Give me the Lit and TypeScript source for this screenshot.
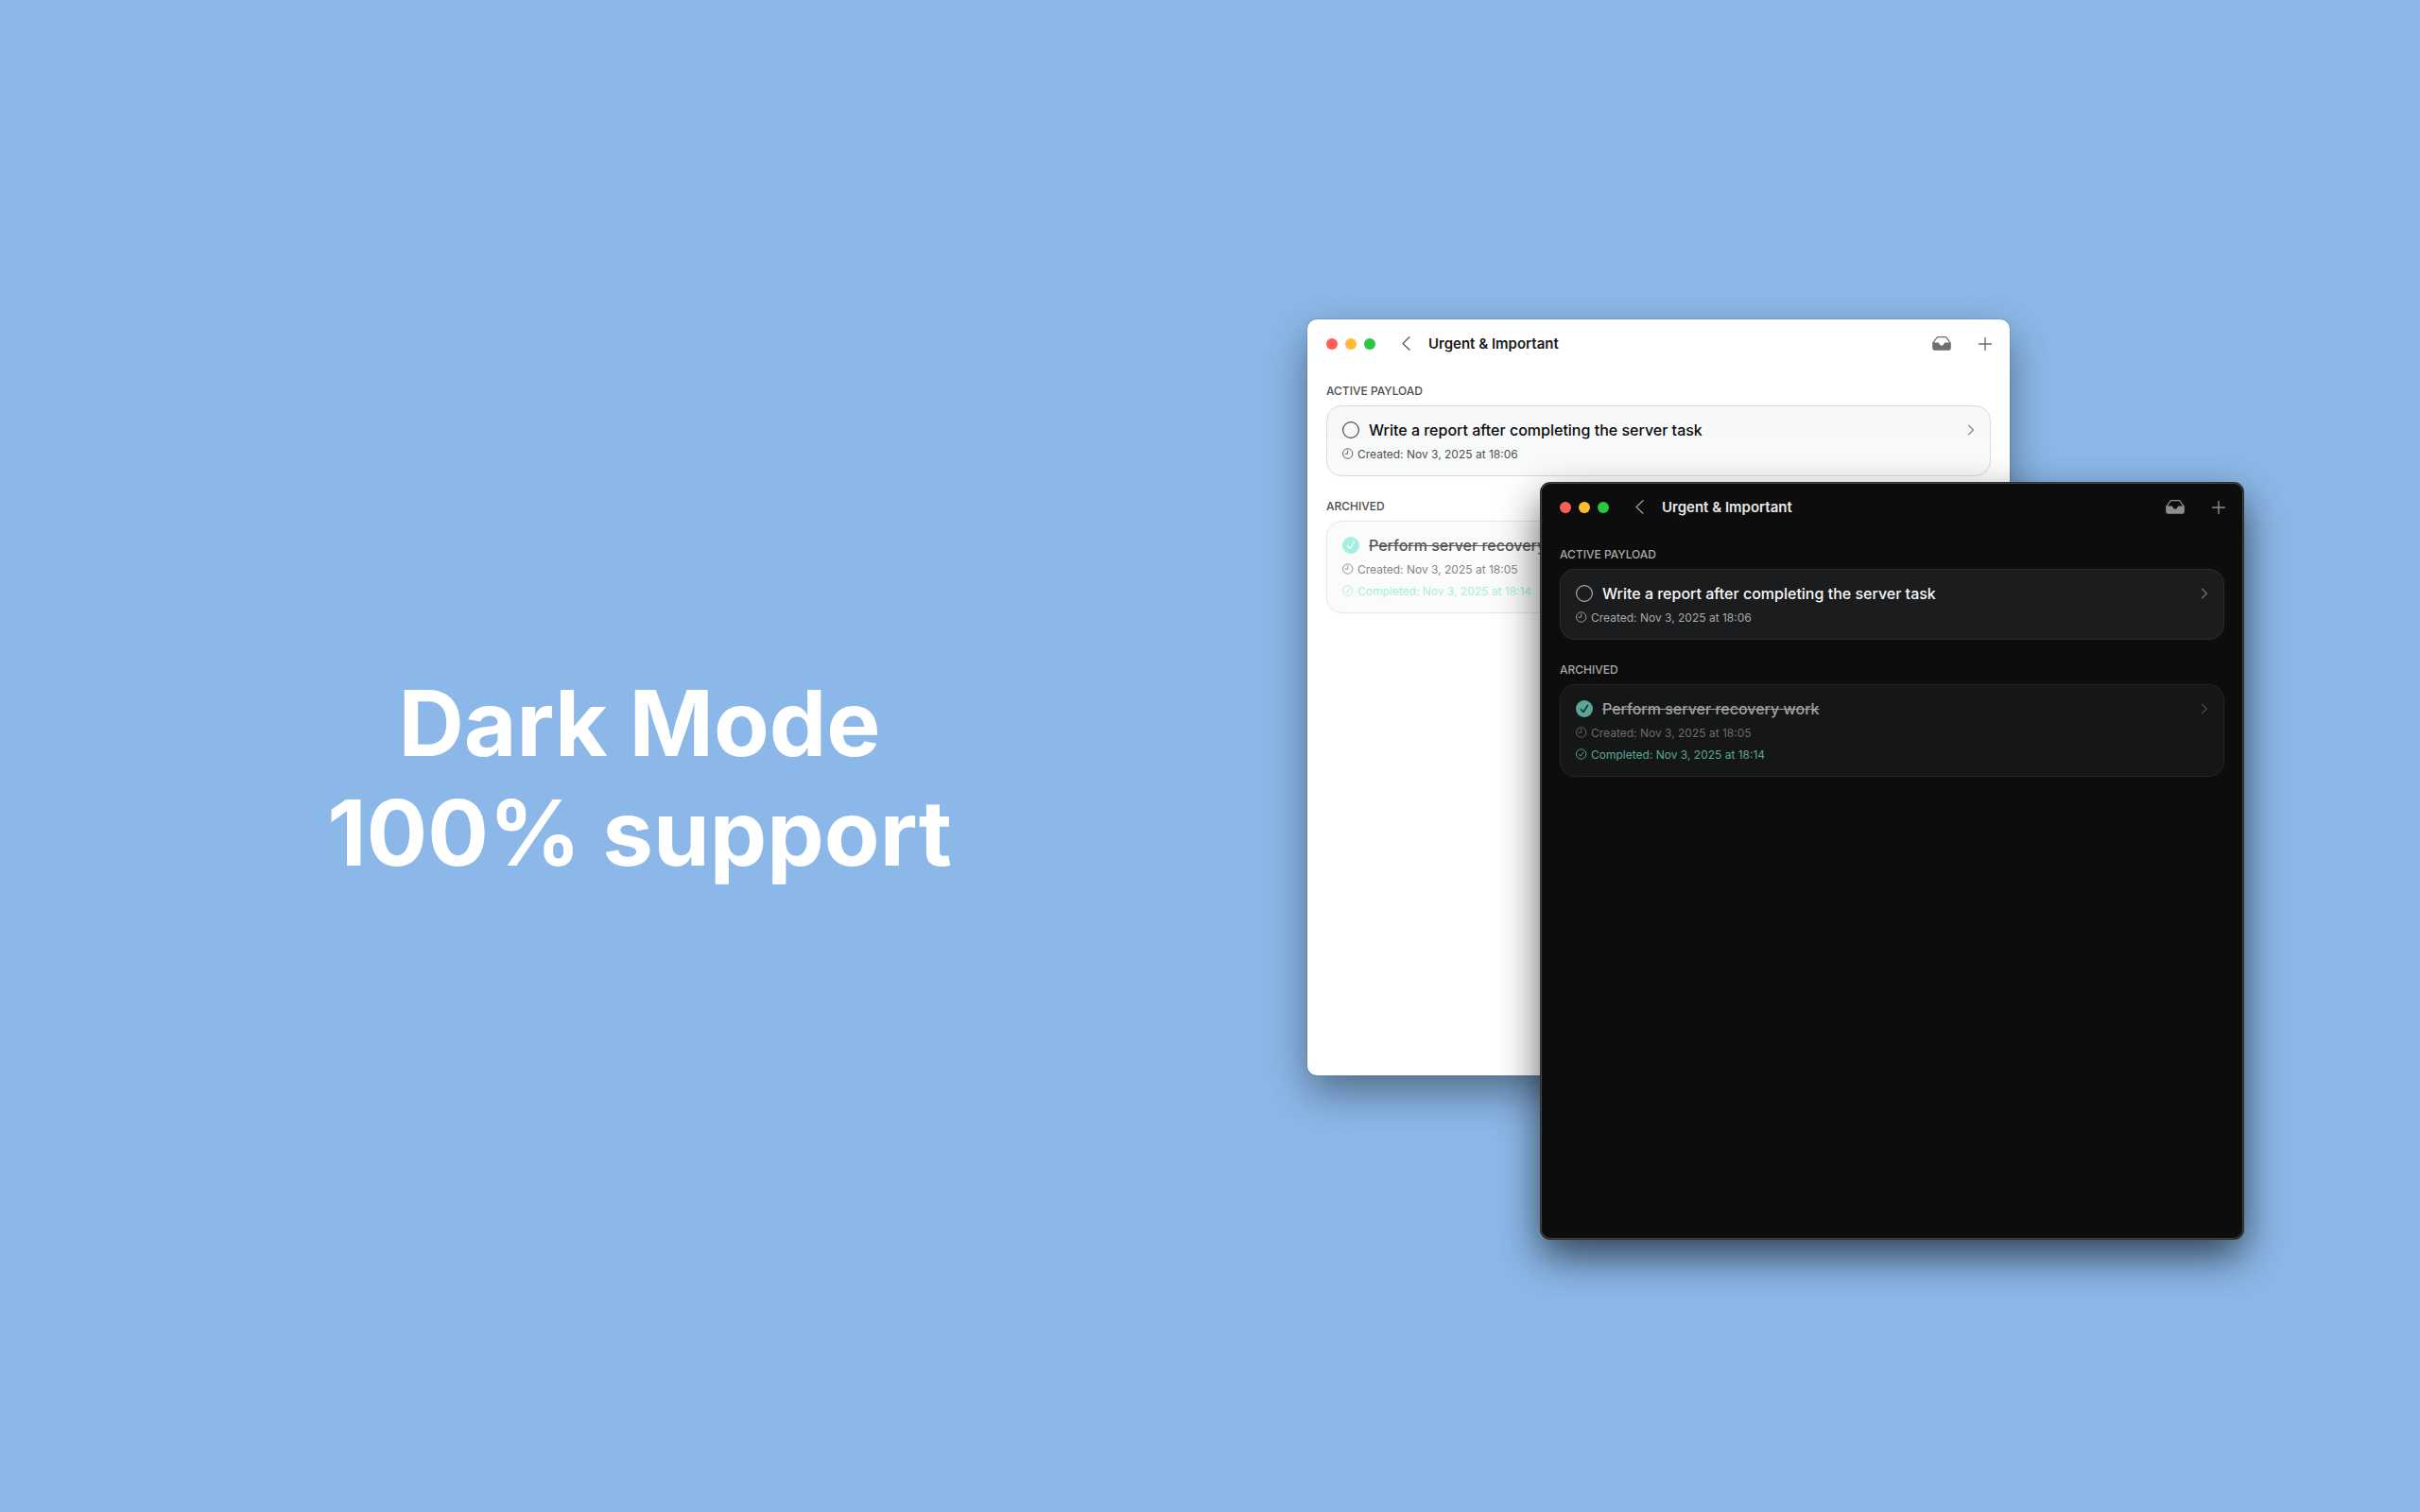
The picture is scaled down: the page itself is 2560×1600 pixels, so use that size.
import { LitElement, html, css, svg, nothing } from "lit";
import { customElement, property } from "lit/decorators.js";

interface Task {
  title: string;
  created: string;
  completed?: string;
}

const ACTIVE: Task[] = [
  { title: "Write a report after completing the server task", created: "Nov 3, 2025 at 18:06" },
];

const ARCHIVED: Task[] = [
  {
    title: "Perform server recovery work",
    created: "Nov 3, 2025 at 18:05",
    completed: "Nov 3, 2025 at 18:14",
  },
];

const clockIcon = html`<svg class="meta-icon" viewBox="0 0 12 12" aria-hidden="true">
  ${svg`<circle cx="5.7" cy="6" r="5.2" fill="none" stroke="currentColor" stroke-width="0.9" />
  <path d="M5.7 2.8V6.2H3.1" fill="none" stroke="currentColor" stroke-width="0.9" stroke-linecap="round" stroke-linejoin="round" />`}
</svg>`;

const doneIcon = html`<svg class="meta-icon" viewBox="0 0 12 12" aria-hidden="true">
  ${svg`<circle cx="5.7" cy="6" r="5.2" fill="none" stroke="currentColor" stroke-width="0.9" />
  <path d="M3.6 6.4 5.1 8.2 7.9 3.9" fill="none" stroke="currentColor" stroke-width="0.9" stroke-linecap="round" stroke-linejoin="round" />`}
</svg>`;

@customElement("task-card")
export class TaskCard extends LitElement {
  @property({ attribute: false }) task!: Task;

  static styles = css`
    :host {
      display: block;
    }
    .card {
      display: grid;
      grid-template-columns: auto minmax(0, 1fr) auto;
      align-items: center;
      column-gap: 10px;
      padding: 16px 16px 15px;
      border: 1px solid var(--card-border);
      border-radius: 16px;
      background: var(--card-bg);
      box-shadow: 0 0 12px var(--card-glow);
    }
    .card.archived {
      border-color: var(--card-border-dim);
      background: var(--card-bg-dim);
    }
    .toggle {
      display: grid;
      padding: 0;
      border: 0;
      background: none;
      color: var(--ring);
    }
    .toggle-icon {
      width: 18px;
      height: 18px;
    }
    .title {
      margin: 0;
      font-size: 16px;
      font-weight: 500;
      line-height: 18px;
      color: var(--text);
      white-space: nowrap;
    }
    .archived .title {
      color: var(--text-dim);
      text-decoration: line-through;
    }
    .open {
      display: grid;
      padding: 0;
      border: 0;
      background: none;
      color: var(--chevron);
    }
    .archived .open {
      color: var(--chevron-dim);
    }
    .open-icon {
      width: 8px;
      height: 12px;
    }
    .metas {
      grid-column: 1 / -1;
      display: grid;
      gap: 8px;
      margin-top: 9px;
    }
    .meta {
      display: flex;
      align-items: center;
      gap: 4px;
      margin: 0;
      font-size: 12px;
      line-height: 15px;
      color: var(--meta);
      white-space: nowrap;
    }
    .meta-icon {
      width: 12px;
      height: 12px;
    }
    .archived .meta {
      color: var(--meta-dim);
    }
    .archived .meta.completed {
      color: var(--mint);
    }
  `;

  render() {
    const { title, created, completed } = this.task;
    return html`<article class="card ${completed ? "archived" : ""}">
      <button class="toggle" aria-label=${completed ? "Mark as active" : "Mark as completed"}>
        <svg class="toggle-icon" viewBox="0 0 18 18" aria-hidden="true">
          ${completed
            ? svg`<circle cx="9" cy="9" r="9" fill="var(--mint)" />
                <path d="M5.3 9.6 8 12.6 12.6 5.4" fill="none" stroke="var(--tick)" stroke-width="1.3" stroke-linecap="round" stroke-linejoin="round" />`
            : svg`<circle cx="9" cy="9" r="8.4" fill="none" stroke="currentColor" stroke-width="1.2" />`}
        </svg>
      </button>
      <h3 class="title">${title}</h3>
      <button class="open" aria-label="Open task">
        <svg class="open-icon" viewBox="0 0 8 12" aria-hidden="true">
          <path d="M1.6 1.3 6.4 6 1.6 10.7" fill="none" stroke="currentColor" stroke-width="1.3" stroke-linecap="round" stroke-linejoin="round" />
        </svg>
      </button>
      <div class="metas">
        <p class="meta">${clockIcon}<span>Created: ${created}</span></p>
        ${completed ? html`<p class="meta completed">${doneIcon}<span>Completed: ${completed}</span></p>` : nothing}
      </div>
    </article>`;
  }
}

@customElement("task-window")
export class TaskWindow extends LitElement {
  @property({ reflect: true }) theme: "light" | "dark" = "light";

  static styles = css`
    :host {
      display: block;
      min-height: 50vh;
      border-radius: 10px;
      background: var(--window);
      box-shadow: var(--window-edge), var(--window-shadow);
    }
    :host([theme="light"]) {
      --window: #ffffff;
      --window-edge: 0 0 0 1px rgba(0, 0, 0, 0.1);
      --window-shadow: 0 18px 44px rgba(0, 0, 0, 0.4);
      --heading: #1a1a1a;
      --label: #4c4c4c;
      --text: #0c0c0c;
      --text-dim: #565656;
      --meta: #505050;
      --meta-dim: #868686;
      --ring: #4c4c4c;
      --mint: #a5eee3;
      --tick: #ffffff;
      --nav: #5a5a5a;
      --icon: #6e6e6e;
      --chevron: #8c8c8c;
      --chevron-dim: #bcbcbc;
      --card-bg: linear-gradient(#f6f7f8, #fafbfb);
      --card-bg-dim: #fbfbfb;
      --card-border: #d9dada;
      --card-border-dim: #e6e7e7;
      --card-glow: rgba(0, 0, 0, 0.01);
    }
    :host([theme="dark"]) {
      --window: #0d0d0d;
      --window-edge: 0 0 0 1px #2c2e30, inset 0 0 0 1px #444444;
      --window-shadow: 0 18px 44px rgba(0, 0, 0, 0.65);
      --heading: #e8e8e8;
      --label: #a9a9a9;
      --text: #f8f8f8;
      --text-dim: #a0a0a0;
      --meta: #a8a8a8;
      --meta-dim: #6c6c6c;
      --ring: #a9a9a9;
      --mint: #5ba69b;
      --tick: #101414;
      --nav: #9c9c9c;
      --icon: #8e8e8e;
      --chevron: #6f7071;
      --chevron-dim: #4b4c4c;
      --card-bg: #1b1c1d;
      --card-bg-dim: #151616;
      --card-border: #2b2d2d;
      --card-border-dim: #232424;
      --card-glow: rgba(20, 40, 30, 0.15);
    }
    .toolbar {
      display: flex;
      align-items: center;
      padding: 16px 19px 16px 20px;
    }
    .lights {
      display: flex;
      gap: 8px;
    }
    .light {
      width: 12px;
      height: 12px;
      padding: 0;
      border: 0;
      border-radius: 50%;
    }
    .close {
      background: #ff5f57;
    }
    .minimise {
      background: #febc2e;
    }
    .zoom {
      background: #28c840;
    }
    .back {
      display: grid;
      margin-left: 28px;
      padding: 0;
      border: 0;
      background: none;
      color: var(--nav);
    }
    .back-icon {
      width: 9px;
      height: 15px;
    }
    .heading {
      flex: 1;
      margin: 0 0 0 19px;
      font-size: 15px;
      font-weight: 600;
      line-height: 20px;
      color: var(--heading);
      white-space: nowrap;
    }
    .actions {
      display: flex;
      align-items: center;
      gap: 29px;
      color: var(--icon);
    }
    .action {
      display: grid;
      padding: 0;
      border: 0;
      background: none;
      color: inherit;
    }
    .tray-icon {
      width: 20px;
      height: 15px;
    }
    .plus-icon {
      width: 14px;
      height: 14px;
    }
    .lists {
      display: grid;
      gap: 24px;
      padding: 16px 20px;
    }
    .list {
      display: grid;
      gap: 7px;
    }
    .label {
      margin: 0;
      font-size: 12px;
      font-weight: 500;
      line-height: 16px;
      color: var(--label);
    }
  `;

  private list(label: string, tasks: Task[]) {
    return html`<section class="list">
      <h2 class="label">${label}</h2>
      ${tasks.map((task) => html`<task-card .task=${task}></task-card>`)}
    </section>`;
  }

  render() {
    return html`
      <header class="toolbar">
        <div class="lights">
          <button class="light close" aria-label="Close"></button>
          <button class="light minimise" aria-label="Minimise"></button>
          <button class="light zoom" aria-label="Zoom"></button>
        </div>
        <button class="back" aria-label="Back">
          <svg class="back-icon" viewBox="0 0 9 15" aria-hidden="true">
            <path d="M8 0.8 1 7.5 8 14.2" fill="none" stroke="currentColor" stroke-width="1.3" stroke-linecap="round" stroke-linejoin="round" />
          </svg>
        </button>
        <h1 class="heading">Urgent &amp; Important</h1>
        <div class="actions">
          <button class="action" aria-label="Archive">
            <svg class="tray-icon" viewBox="0 0 20 15" aria-hidden="true">
              <path d="M0.8 7.2 4.6 1.7Q5.2 0.7 6.4 0.7H13.6Q14.8 0.7 15.4 1.7L19.2 7.2" fill="none" stroke="currentColor" stroke-width="1.2" stroke-linejoin="round" />
              <path d="M0.2 6.6H6.6Q7.2 6.6 7.3 7.3Q7.8 9.7 10 9.7T12.7 7.3Q12.8 6.6 13.4 6.6H19.8V12.4Q19.8 14.7 17.5 14.7H2.5Q0.2 14.7 0.2 12.4Z" fill="currentColor" />
            </svg>
          </button>
          <button class="action" aria-label="New task">
            <svg class="plus-icon" viewBox="0 0 14 14" aria-hidden="true">
              <path d="M7 0.6V13.4M0.6 7H13.4" fill="none" stroke="currentColor" stroke-width="1.4" stroke-linecap="round" />
            </svg>
          </button>
        </div>
      </header>
      <main class="lists">${this.list("ACTIVE PAYLOAD", ACTIVE)} ${this.list("ARCHIVED", ARCHIVED)}</main>
    `;
  }
}

@customElement("app-root")
export class AppRoot extends LitElement {
  static styles = css`
    :host {
      display: block;
      font-family: Inter, "Liberation Sans", sans-serif;
    }
    .stage {
      box-sizing: border-box;
      display: grid;
      grid-template-columns: minmax(0, 1383fr) minmax(0, 990fr) minmax(0, 187fr);
      align-items: center;
      min-height: 100vh;
      padding-top: 48px;
      background: #8bb8e8;
    }
    .headline {
      margin: 0;
      padding: 0 30px 2px 0;
      font-size: 96px;
      font-weight: 700;
      line-height: 116px;
      text-align: center;
      color: #ffffff;
    }
    .line {
      display: block;
    }
    .windows {
      display: grid;
      grid-template-columns: minmax(0, 247fr) minmax(0, 496fr) minmax(0, 247fr);
      grid-template-rows: 173px auto 173px;
    }
    .back-window {
      grid-area: 1 / 1 / 3 / 3;
    }
    .front-window {
      grid-area: 2 / 2 / 4 / 4;
    }
  `;

  render() {
    return html`<div class="stage">
      <h1 class="headline"><span class="line">Dark Mode</span><span class="line">100% support</span></h1>
      <div class="windows">
        <task-window class="back-window" theme="light"></task-window>
        <task-window class="front-window" theme="dark"></task-window>
      </div>
    </div>`;
  }
}
